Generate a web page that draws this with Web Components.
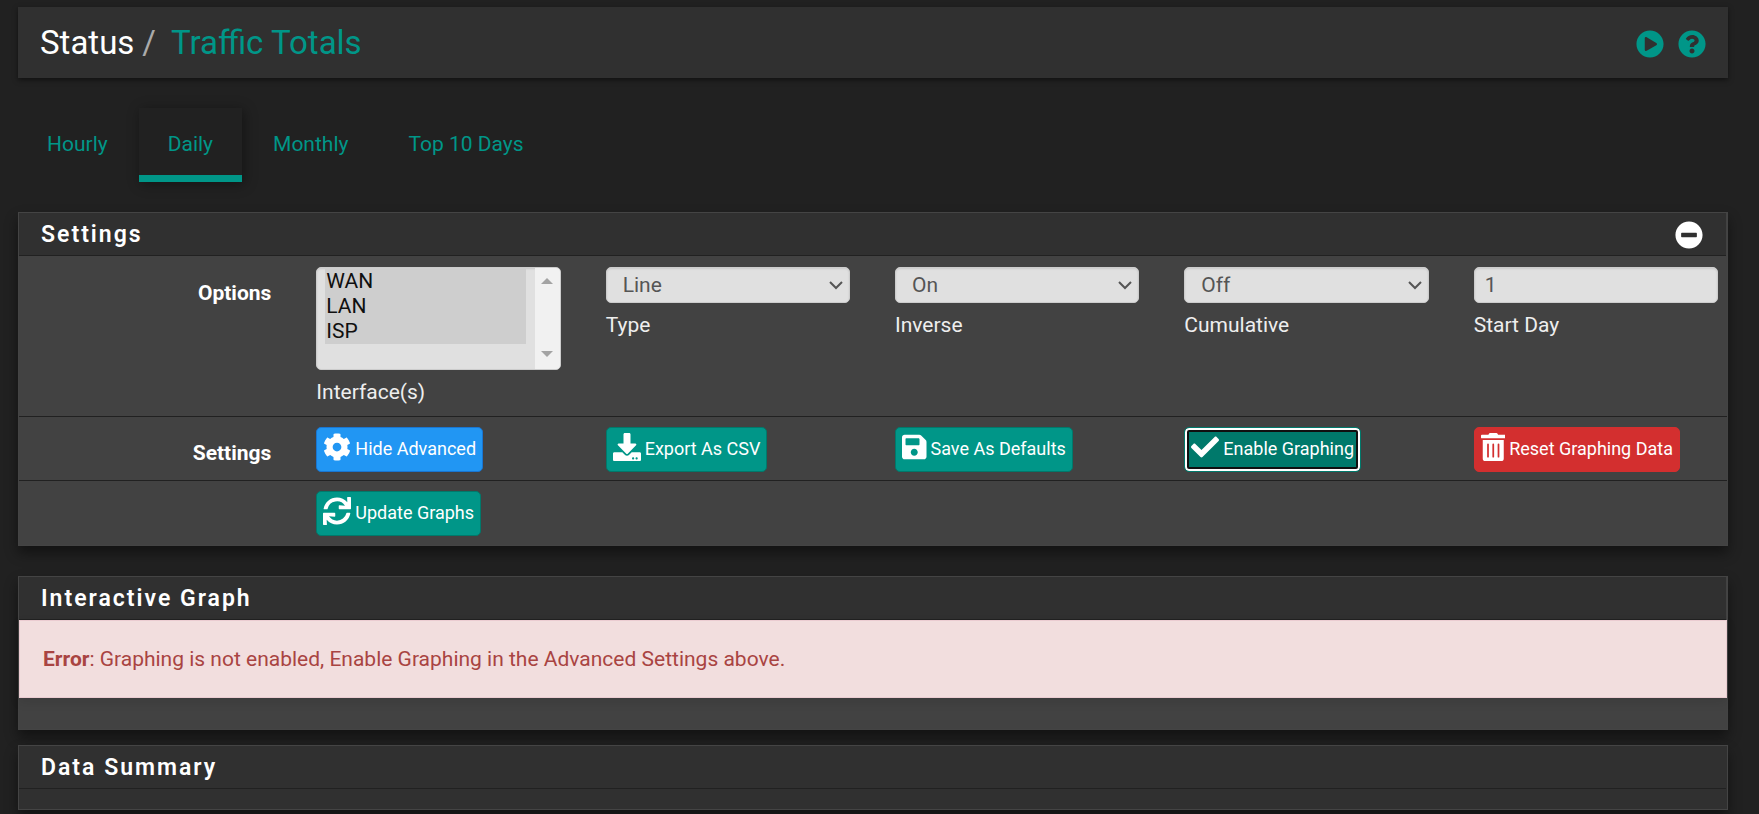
<!DOCTYPE html>
<html lang="en">
<head>
<meta charset="utf-8">
<meta name="viewport" content="width=device-width, initial-scale=1">
<title>Status: Traffic Totals</title>
<style>
  body { margin: 0; background: #212121; color: #eee; font: 21px/28px Roboto, "Noto Sans", sans-serif; }
</style>
</head>
<body>
<traffic-page></traffic-page>
<script>
const ICONS = {
  play: ['512', 'M256 8C119 8 8 119 8 256s111 248 248 248 248-111 248-248S393 8 256 8zm115.7 272l-176 101c-15.8 8.8-35.7-2.5-35.7-21V152c0-18.4 19.8-29.8 35.7-21l176 107c16.4 9.2 16.4 32.9 0 42z'],
  question: ['512', 'M504 256c0 136.997-111.043 248-248 248S8 392.997 8 256C8 119.083 119.043 8 256 8s248 111.083 248 248zM262.655 90c-54.497 0-89.255 22.957-116.549 63.758-3.536 5.286-2.353 12.415 2.715 16.258l34.699 26.31c5.205 3.947 12.621 3.008 16.665-2.122 17.864-22.658 30.113-35.797 57.303-35.797 20.429 0 45.698 13.148 45.698 32.958 0 14.976-12.363 22.667-32.534 33.976C247.128 238.528 216 254.941 216 296v4c0 6.627 5.373 12 12 12h56c6.627 0 12-5.373 12-12v-1.333c0-28.462 83.186-29.647 83.186-106.667 0-58.002-60.165-102-116.531-102zM256 338c-25.365 0-46 20.635-46 46 0 25.364 20.635 46 46 46s46-20.636 46-46c0-25.364-20.635-46-46-46z'],
  minus: ['512', 'M256 8C119 8 8 119 8 256s111 248 248 248 248-111 248-248S393 8 256 8zM124 296c-6.600 0-12-5.400-12-12v-56c0-6.600 5.400-12 12-12h264c6.600 0 12 5.400 12 12v56c0 6.600-5.400 12-12 12H124z'],
  cog: ['512', 'M487.400 315.700l-42.600-24.600c4.300-23.200 4.300-47 0-70.200l42.600-24.600c4.900-2.800 7.100-8.600 5.500-14-11.100-35.600-30-67.800-54.700-94.600-3.800-4.100-10-5.100-14.800-2.300L380.800 110c-17.900-15.400-38.500-27.300-60.800-35.100V25.800c0-5.600-3.900-10.500-9.400-11.700-36.700-8.200-74.300-7.800-109.200 0-5.500 1.200-9.400 6.100-9.400 11.700V75c-22.200 7.900-42.800 19.800-60.800 35.100L88.700 85.500c-4.900-2.800-11-1.900-14.800 2.300-24.700 26.700-43.600 58.900-54.700 94.600-1.700 5.400.6 11.200 5.500 14L67.300 221c-4.300 23.200-4.300 47 0 70.200l-42.600 24.600c-4.900 2.800-7.100 8.600-5.500 14 11.100 35.600 30 67.800 54.700 94.600 3.800 4.100 10 5.100 14.800 2.300l42.600-24.600c17.900 15.400 38.500 27.300 60.800 35.100v49.200c0 5.600 3.900 10.500 9.400 11.700 36.700 8.200 74.300 7.800 109.200 0 5.500-1.200 9.400-6.100 9.400-11.700v-49.200c22.200-7.900 42.800-19.800 60.800-35.100l42.600 24.600c4.900 2.800 11 1.900 14.800-2.300 24.700-26.700 43.600-58.900 54.700-94.600 1.500-5.500-.7-11.300-5.600-14.100zM256 336c-44.100 0-80-35.900-80-80s35.900-80 80-80 80 35.900 80 80-35.900 80-80 80z'],
  download: ['512', 'M216 0h80c13.300 0 24 10.700 24 24v168h87.700c17.800 0 26.700 21.500 14.100 34.100L269.700 378.300c-7.500 7.500-19.800 7.500-27.300 0L90.100 226.100c-12.600-12.600-3.700-34.100 14.100-34.100H192V24c0-13.300 10.700-24 24-24zm296 376v112c0 13.300-10.700 24-24 24H24c-13.300 0-24-10.700-24-24V376c0-13.300 10.700-24 24-24h146.700l49 49c20.100 20.100 52.500 20.100 72.600 0l49-49H488c13.300 0 24 10.700 24 24zm-124 88c0-11-9-20-20-20s-20 9-20 20 9 20 20 20 20-9 20-20zm64 0c0-11-9-20-20-20s-20 9-20 20 9 20 20 20 20-9 20-20z'],
  save: ['448', 'M433.941 129.941l-83.882-83.882A48 48 0 0 0 316.118 32H48C21.490 32 0 53.490 0 80v352c0 26.510 21.490 48 48 48h352c26.510 0 48-21.490 48-48V163.882a48 48 0 0 0-14.059-33.941zM224 416c-35.346 0-64-28.654-64-64 0-35.346 28.654-64 64-64s64 28.654 64 64c0 35.346-28.654 64-64 64zm96-304.520V212c0 6.627-5.373 12-12 12H76c-6.627 0-12-5.373-12-12V108c0-6.627 5.373-12 12-12h228.520c3.183 0 6.235 1.264 8.485 3.515l3.480 3.480A11.996 11.996 0 0 1 320 111.480z'],
  check: ['512', 'M173.898 439.404l-166.400-166.400c-9.997-9.997-9.997-26.206 0-36.204l36.203-36.204c9.997-9.998 26.207-9.998 36.204 0L192 312.690 432.095 72.596c9.997-9.997 26.207-9.997 36.204 0l36.203 36.204c9.997 9.997 9.997 26.206 0 36.204l-294.400 294.401c-9.998 9.997-26.207 9.997-36.204-.001z'],
  trash: ['448', 'M32 464a48 48 0 0 0 48 48h288a48 48 0 0 0 48-48V128H32zm272-256a16 16 0 0 1 32 0v224a16 16 0 0 1-32 0zm-96 0a16 16 0 0 1 32 0v224a16 16 0 0 1-32 0zm-96 0a16 16 0 0 1 32 0v224a16 16 0 0 1-32 0zM432 32H312l-9.400-18.700A24 24 0 0 0 281.100 0H166.800a23.720 23.720 0 0 0-21.400 13.300L136 32H16A16 16 0 0 0 0 48v32a16 16 0 0 0 16 16h416a16 16 0 0 0 16-16V48a16 16 0 0 0-16-16z'],
  sync: ['512', 'M440.650 12.570l4 82.770A247.160 247.160 0 0 0 255.830 8C134.730 8 33.910 94.920 12.290 209.820A12 12 0 0 0 24.090 224h49.050a12 12 0 0 0 11.670-9.260 175.910 175.910 0 0 1 317-56.940l-101.460-4.860a12 12 0 0 0-12.570 12v47.410a12 12 0 0 0 12 12H500a12 12 0 0 0 12-12V12a12 12 0 0 0-12-12h-47.370a12 12 0 0 0-11.980 12.570zM255.830 432a175.610 175.610 0 0 1-146-77.800l101.800 4.870a12 12 0 0 0 12.570-12v-47.400a12 12 0 0 0-12-12H12a12 12 0 0 0-12 12V500a12 12 0 0 0 12 12h47.350a12 12 0 0 0 12-12.600l-4.150-82.570A247.170 247.170 0 0 0 255.830 504c121.110 0 221.930-86.920 243.550-201.820a12 12 0 0 0-11.800-14.180h-49.050a12 12 0 0 0-11.670 9.260A175.860 175.860 0 0 1 255.830 432z']
};

class BaseElement extends HTMLElement {
  constructor() { super(); this.attachShadow({ mode: 'open' }); }
  connectedCallback() { this.shadowRoot.innerHTML = this.render(); }
  attr(name) { return this.getAttribute(name) || ''; }
}

customElements.define('ui-icon', class extends BaseElement {
  render() {
    const [width, path] = ICONS[this.attr('name')];
    return `<style>
      :host { display: block; flex: none; }
      svg { display: block; height: 28px; fill: currentColor; }
    </style><svg viewBox="0 0 ${width} 512" aria-hidden="true"><path d="${path}"/></svg>`;
  }
});

customElements.define('page-header', class extends BaseElement {
  render() {
    return `<style>
      :host { display: flex; align-items: center; justify-content: space-between; min-height: 71px; padding: 0 22px;
        box-sizing: border-box; background: #303030; box-shadow: 0 2px 5px rgba(0,0,0,.5); }
      ol { display: flex; margin: 0; padding: 0; list-style: none; font-size: 33px; line-height: 36px; color: #fff; }
      li + li::before { content: "/"; color: #aaa; padding: 0 15px 0 8px; }
      a { color: #009688; text-decoration: none; }
      nav { display: flex; gap: 14px; padding-top: 2px; }
    </style>
    <ol><li>Status</li><li><a href="#totals">Traffic Totals</a></li></ol>
    <nav><a href="#service" aria-label="Start service"><ui-icon name="play"></ui-icon></a>
    <a href="#help" aria-label="Help"><ui-icon name="question"></ui-icon></a></nav>`;
  }
});

customElements.define('tab-link', class extends BaseElement {
  render() {
    return `<style>
      :host { display: block; }
      a { display: block; padding: 22px 29px 17px; border-bottom: 7px solid transparent; color: #009688; text-decoration: none; }
      :host([active]) a { border-color: #009688; box-shadow: 2px 2px 12px rgba(0,0,0,.4); }
    </style><a href="#${this.attr('target')}"><slot></slot></a>`;
  }
});

customElements.define('tab-bar', class extends BaseElement {
  render() {
    return `<style>:host { display: block; } nav { display: flex; gap: 2px; }</style><nav><slot></slot></nav>`;
  }
});

customElements.define('ui-panel', class extends BaseElement {
  render() {
    return `<style>
      :host { display: block; background: #424242; border: 1px solid #444; box-shadow: 0 7px 12px rgba(0,0,0,.45); }
      :host([empty]) { background: #303030; }
      header { display: flex; align-items: center; justify-content: space-between; min-height: 41px; padding: 1px 23px 0 22px;
        margin-right: 1px; background: #303030; border-bottom: 1px solid #212121; }
      h2 { margin: 0; font-size: 23px; line-height: 28px; font-weight: 600; letter-spacing: 2px; color: #fff; }
      button { margin: 0; padding: 0; border: 0; background: none; color: #fff; }
      .body { padding: var(--panel-padding, 0); }
    </style>
    <header><h2>${this.attr('heading')}</h2>${this.hasAttribute('collapsible')
      ? '<button type="button" aria-label="Collapse"><ui-icon name="minus"></ui-icon></button>' : ''}</header>
    <div class="body"><slot></slot></div>`;
  }
});

customElements.define('form-row', class extends BaseElement {
  render() {
    return `<style>
      :host { display: block; padding: 10px 0 8px; }
      :host(:not(:last-of-type)) { border-bottom: 1px solid #212121; }
      .grid { display: grid; grid-template-columns: repeat(6, minmax(0, 1fr)); margin: 0 -14px; }
      .label { padding: 12px 23px 0 22px; text-align: right; font-weight: 700; color: #fff; }
    </style>
    <div class="grid"><div class="label">${this.attr('label')}</div><slot></slot></div>`;
  }
});

customElements.define('form-field', class extends BaseElement {
  control() {
    const value = this.attr('value');
    switch (this.attr('type')) {
      case 'list':
        return `<select id="control" multiple>${value.split(',').map(v => `<option selected>${v}</option>`).join('')}</select>
          <div class="scrollbar" aria-hidden="true">
            <svg width="12" height="6" viewBox="0 0 12 6"><path d="M6 0l6 6H0z"/></svg>
            <svg width="12" height="6" viewBox="0 0 12 6"><path d="M0 0h12L6 6z"/></svg>
          </div>`;
      case 'select':
        return `<select id="control"><option>${value}</option></select>
          <svg class="arrow" width="14" height="9" viewBox="0 0 14 9" aria-hidden="true"><path d="M1 1l6 6 6-6"/></svg>`;
      default:
        return `<input id="control" type="text" value="${value}">`;
    }
  }
  render() {
    return `<style>
      :host { display: block; padding: 0 23px 2px 22px; }
      .box { position: relative; }
      select, input { display: block; box-sizing: border-box; width: 100%; height: 36px; margin: 0; padding: 0 10px;
        border: 1px solid #ccc; border-radius: 5px; background: #e0e0e0; color: #555; font: inherit; line-height: 25px;
        appearance: none; outline: none; box-shadow: inset 0 1px 2px rgba(0,0,0,.1); }
      select { padding: 0 30px 0 16px; }
      select[multiple] { height: 103px; padding: 1px 34px 0 8px; overflow: hidden; }
      option { padding: 0 1px; min-height: 25px; line-height: 25px; }
      .arrow { position: absolute; right: 7px; top: 14px; fill: none; stroke: #555; stroke-width: 2; }
      .scrollbar { position: absolute; inset: 1px 1px 1px auto; width: 25px; display: flex; flex-direction: column;
        align-items: center; justify-content: space-between; box-sizing: border-box; padding: 10px 0 12px;
        background: #f1f1f1; border-radius: 0 4px 4px 0; fill: #a3a3a3; }
      label { display: block; margin-top: 8px; }
    </style>
    <div class="box">${this.control()}</div><label for="control">${this.attr('label')}</label>`;
  }
});

customElements.define('action-button', class extends BaseElement {
  render() {
    return `<style>
      :host { display: block; padding: 0 22px; }
      button { display: flex; align-items: flex-start; gap: 4px; height: 45px; margin: 0; padding: 5px 6px; box-sizing: border-box;
        border: 1px solid #00796b; border-radius: 5px; background: #009688; color: #fff; font: inherit; font-size: 18px; white-space: nowrap; }
      span { padding-top: 2px; }
      :host([kind=info]) button { background: #2196f3; border-color: #1976d2; }
      :host([kind=danger]) button { background: #d32f2f; border-color: #d32f2f; }
      :host([kind=active]) button { background: #00796b; box-shadow: inset 0 0 0 2px #fff, inset 0 0 0 4px #101010; }
    </style>
    <button type="button"><ui-icon name="${this.attr('icon')}"></ui-icon><span><slot></slot></span></button>`;
  }
});

customElements.define('alert-box', class extends BaseElement {
  render() {
    return `<style>
      :host { display: block; padding: 24px 23px; background: #f2dede; border: 1px solid #ebccd1; color: #a94442;
        box-shadow: 0 4px 10px rgba(0,0,0,.1); }
    </style><div role="alert"><slot></slot></div>`;
  }
});

customElements.define('traffic-page', class extends BaseElement {
  render() {
    return `<style>
      :host { display: block; padding: 7px 31px 4px 18px; }
      tab-bar, .settings, .graph { margin-top: 30px; }
      .settings { --panel-padding: 1px 0 1px; }
      .graph { --panel-padding: 0 0 31px; }
      .summary { margin-top: 15px; --panel-padding: 20px 0 0; }
    </style>
    <page-header></page-header>
    <main>
      <tab-bar>
        <tab-link target="hourly">Hourly</tab-link>
        <tab-link target="daily" active>Daily</tab-link>
        <tab-link target="monthly">Monthly</tab-link>
        <tab-link target="top">Top 10 Days</tab-link>
      </tab-bar>
      <ui-panel class="settings" heading="Settings" collapsible>
        <form-row label="Options">
          <form-field type="list" value="WAN,LAN,ISP" label="Interface(s)"></form-field>
          <form-field type="select" value="Line" label="Type"></form-field>
          <form-field type="select" value="On" label="Inverse"></form-field>
          <form-field type="select" value="Off" label="Cumulative"></form-field>
          <form-field type="text" value="1" label="Start Day"></form-field>
        </form-row>
        <form-row label="Settings">
          <action-button icon="cog" kind="info">Hide Advanced</action-button>
          <action-button icon="download">Export As CSV</action-button>
          <action-button icon="save">Save As Defaults</action-button>
          <action-button icon="check" kind="active">Enable Graphing</action-button>
          <action-button icon="trash" kind="danger">Reset Graphing Data</action-button>
        </form-row>
        <form-row>
          <action-button icon="sync">Update Graphs</action-button>
        </form-row>
      </ui-panel>
      <ui-panel class="graph" heading="Interactive Graph">
        <alert-box><strong>Error</strong>: Graphing is not enabled, Enable Graphing in the Advanced Settings above.</alert-box>
      </ui-panel>
      <ui-panel class="summary" heading="Data Summary" empty></ui-panel>
    </main>`;
  }
});
</script>
</body>
</html>
